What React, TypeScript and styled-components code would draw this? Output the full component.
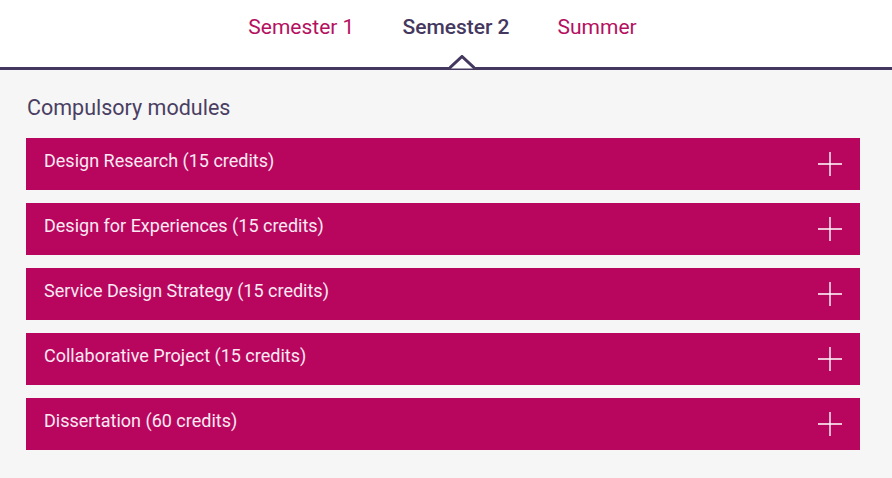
import React from 'react';
import styled, { createGlobalStyle } from 'styled-components';

const GlobalStyle = createGlobalStyle`
  html, body {
    margin: 0;
    padding: 0;
    background: #f6f6f6;
    font-family: Roboto, "Liberation Sans", sans-serif;
  }
`;

const StyledTabsBar = styled.div`
  display: flex;
  justify-content: center;
  gap: 48px;
  height: 67px;
  padding-right: 7px;
  background: #ffffff;
  border-bottom: 3px solid #45385f;
  box-sizing: content-box;
`;

const StyledTab = styled.button<{ $active?: boolean }>`
  position: relative;
  height: 67px;
  padding: 0 0 13px;
  border: none;
  background: none;
  cursor: pointer;
  font-family: inherit;
  font-size: 21px;
  font-weight: ${({ $active }) => ($active ? 500 : 400)};
  color: ${({ $active }) => ($active ? '#45385f' : '#b5105f')};
`;

// chevron notch rising out of the bar under the active tab
const StyledCaret = styled.svg`
  position: absolute;
  left: 50%;
  bottom: -2px;
  margin-left: -7px;
`;

const Caret = () => (
  <StyledCaret width="26" height="14" viewBox="0 0 26 14">
    <polyline points="0,13.5 13,1.5 26,13.5" fill="#ffffff" stroke="#45385f" strokeWidth="3" />
  </StyledCaret>
);

const StyledContent = styled.div`
  padding: 25px 32px 27px 26px;
`;

const StyledHeading = styled.h2`
  margin: 0 0 17px 1px;
  font-size: 21.5px;
  font-weight: 400;
  line-height: 26px;
  color: #4a3f63;
`;

const StyledList = styled.div`
  display: flex;
  flex-direction: column;
  gap: 13px;
`;

const StyledModule = styled.button`
  display: flex;
  align-items: center;
  justify-content: space-between;
  height: 52px;
  padding: 0 18px;
  border: none;
  background: #b8065f;
  cursor: pointer;
  text-align: left;
`;

const StyledModuleName = styled.span`
  font-family: Roboto, "Liberation Sans", sans-serif;
  font-size: 18px;
  color: #fbe9f3;
  margin-top: -8px;
`;

const PlusIcon = () => (
  <svg width="24" height="24" viewBox="0 0 24 24">
    <path d="M12 0v24M0 12h24" stroke="#ffffff" strokeWidth="1.4" fill="none" />
  </svg>
);

const tabs = ['Semester 1', 'Semester 2', 'Summer'];

const modules = [
  'Design Research (15 credits)',
  'Design for Experiences (15 credits)',
  'Service Design Strategy (15 credits)',
  'Collaborative Project (15 credits)',
  'Dissertation (60 credits)',
];

const App = () => {
  const active = 1;
  return (
    <>
      <GlobalStyle />
      <StyledTabsBar>
        {tabs.map((tab, i) => (
          <StyledTab key={tab} $active={i === active}>
            {tab}
            {i === active && <Caret />}
          </StyledTab>
        ))}
      </StyledTabsBar>
      <StyledContent>
        <StyledHeading>Compulsory modules</StyledHeading>
        <StyledList>
          {modules.map((name) => (
            <StyledModule key={name}>
              <StyledModuleName>{name}</StyledModuleName>
              <PlusIcon />
            </StyledModule>
          ))}
        </StyledList>
      </StyledContent>
    </>
  );
};

export default App;
